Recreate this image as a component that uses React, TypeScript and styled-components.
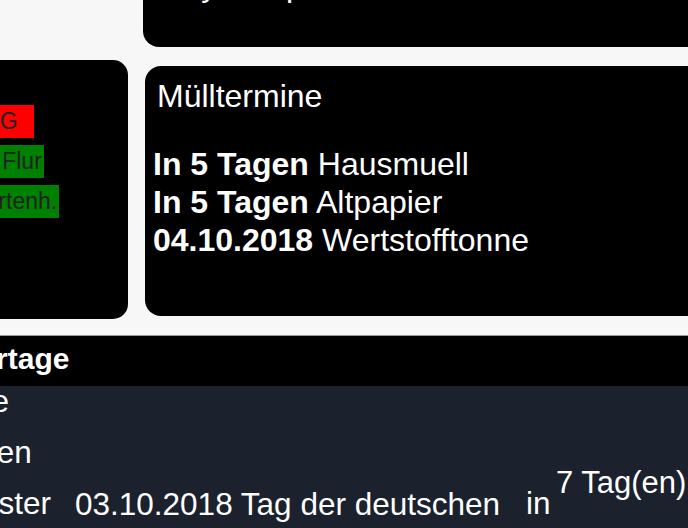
import React from 'react'
import styled, { createGlobalStyle } from 'styled-components'

const GlobalStyle = createGlobalStyle`
  html, body {
    margin: 0;
    padding: 0;
  }
  body {
    background: #f7f7f7;
    font-family: 'Liberation Sans', Arial, sans-serif;
    overflow: hidden;
  }
`

interface BadgeItem {
  label: string
  state: 'alarm' | 'ok'
}

interface HolidayItem {
  label: string
  name?: string
  days?: string
}

const badges: BadgeItem[] = [
  { label: 'Bad EG', state: 'alarm' },
  { label: 'Spots Flur', state: 'ok' },
  { label: 'im Gartenh.', state: 'ok' },
]

const waste = [
  { when: 'In 5 Tagen', what: 'Hausmuell' },
  { when: 'In 5 Tagen', what: 'Altpapier' },
  { when: '04.10.2018', what: 'Wertstofftonne' },
]

const holidays: HolidayItem[] = [
  { label: 'Heute' },
  { label: 'Morgen' },
  { label: 'Nächster', name: '03.10.2018 Tag der deutschen Einheit', days: '7 Tag(en)' },
]

const App: React.FC = () => {
  return (
    <Page>
      <GlobalStyle />
      <Dashboard>
        <StatusPanel>
          <BadgeList>
            {badges.map(b => (
              <Badge key={b.label} $state={b.state}>
                {b.label}
              </Badge>
            ))}
          </BadgeList>
        </StatusPanel>
        <TopCard>
          <CardTitle>Play Temp</CardTitle>
        </TopCard>
        <WasteCard>
          <CardTitle>Mülltermine</CardTitle>
          <WasteList>
            {waste.map(w => (
              <WasteLine key={w.what}>
                <b>{w.when}</b> {w.what}
              </WasteLine>
            ))}
          </WasteList>
        </WasteCard>
      </Dashboard>
      <Holidays>
        <HolidayHeader>Feiertage</HolidayHeader>
        <HolidayList>
          {holidays.map(h => (
            <HolidayRow key={h.label}>
              <span>{h.label}</span>
              <HolidayName>{h.name}</HolidayName>
              <span>{h.days ? 'in' : ''}</span>
              <Days>{h.days}</Days>
            </HolidayRow>
          ))}
        </HolidayList>
      </Holidays>
    </Page>
  )
}

export default App

const Page = styled.div`
  width: 840px;
  margin-left: -80px;
`

const Dashboard = styled.div`
  display: grid;
  grid-template-columns: 208px 1fr;
  grid-template-rows: 92px auto;
  column-gap: 17px;
  align-items: start;
  margin-top: -45px;
`

const Card = styled.div`
  background: #000;
  color: #fff;
  border-radius: 16px;
  box-sizing: border-box;
`

const StatusPanel = styled(Card)`
  grid-column: 1;
  grid-row: 1 / 3;
  margin-top: 105px;
  height: 259px;
  border-radius: 15px;
  padding: 45px 0 0 15px;
`

const BadgeList = styled.div`
  display: flex;
  flex-direction: column;
  align-items: flex-start;
  gap: 7px;
`

const Badge = styled.div<{ $state: 'alarm' | 'ok' }>`
  background: ${p => (p.$state === 'alarm' ? '#ff0000' : '#008000')};
  color: #222;
  font-size: 23px;
  line-height: 33px;
  height: 33px;
  padding: 0 2px;
  min-width: 99px;
  box-sizing: border-box;
  white-space: nowrap;
`

const TopCard = styled(Card)`
  grid-column: 2;
  grid-row: 1;
  height: 92px;
  margin-left: -2px;
`

const WasteCard = styled(Card)`
  grid-column: 2;
  grid-row: 2;
  height: 250px;
  margin-top: 19px;
`

const CardTitle = styled.div`
  font-size: 32px;
  padding: 12px 12px 0;
  white-space: nowrap;
`

const WasteList = styled.div`
  margin-top: 30px;
  padding-left: 8px;
  font-size: 32px;
  line-height: 38px;
`

const WasteLine = styled.div`
  white-space: nowrap;
`

const Holidays = styled.section`
  margin-top: 16px;
  border-top: 1px solid #9a9a9a;
`

const HolidayHeader = styled.div`
  background: #000;
  color: #fff;
  font-weight: bold;
  font-size: 30px;
  height: 50px;
  line-height: 46px;
  padding-left: 16px;
`

const HolidayList = styled.div`
  background: #1c212e;
  color: #fff;
  font-size: 31.5px;
  padding: 2px 0 0 5px;
  min-height: 200px;
`

const HolidayRow = styled.div`
  display: grid;
  grid-template-columns: 150px 451px 30px auto;
  align-items: start;
  line-height: 27px;
  padding-bottom: 24px;
`

const HolidayName = styled.span`
  line-height: 46px;
  margin-top: -9.5px;
`

const Days = styled.span`
  font-size: 31px;
  margin-top: -21px;
  white-space: nowrap;
`
